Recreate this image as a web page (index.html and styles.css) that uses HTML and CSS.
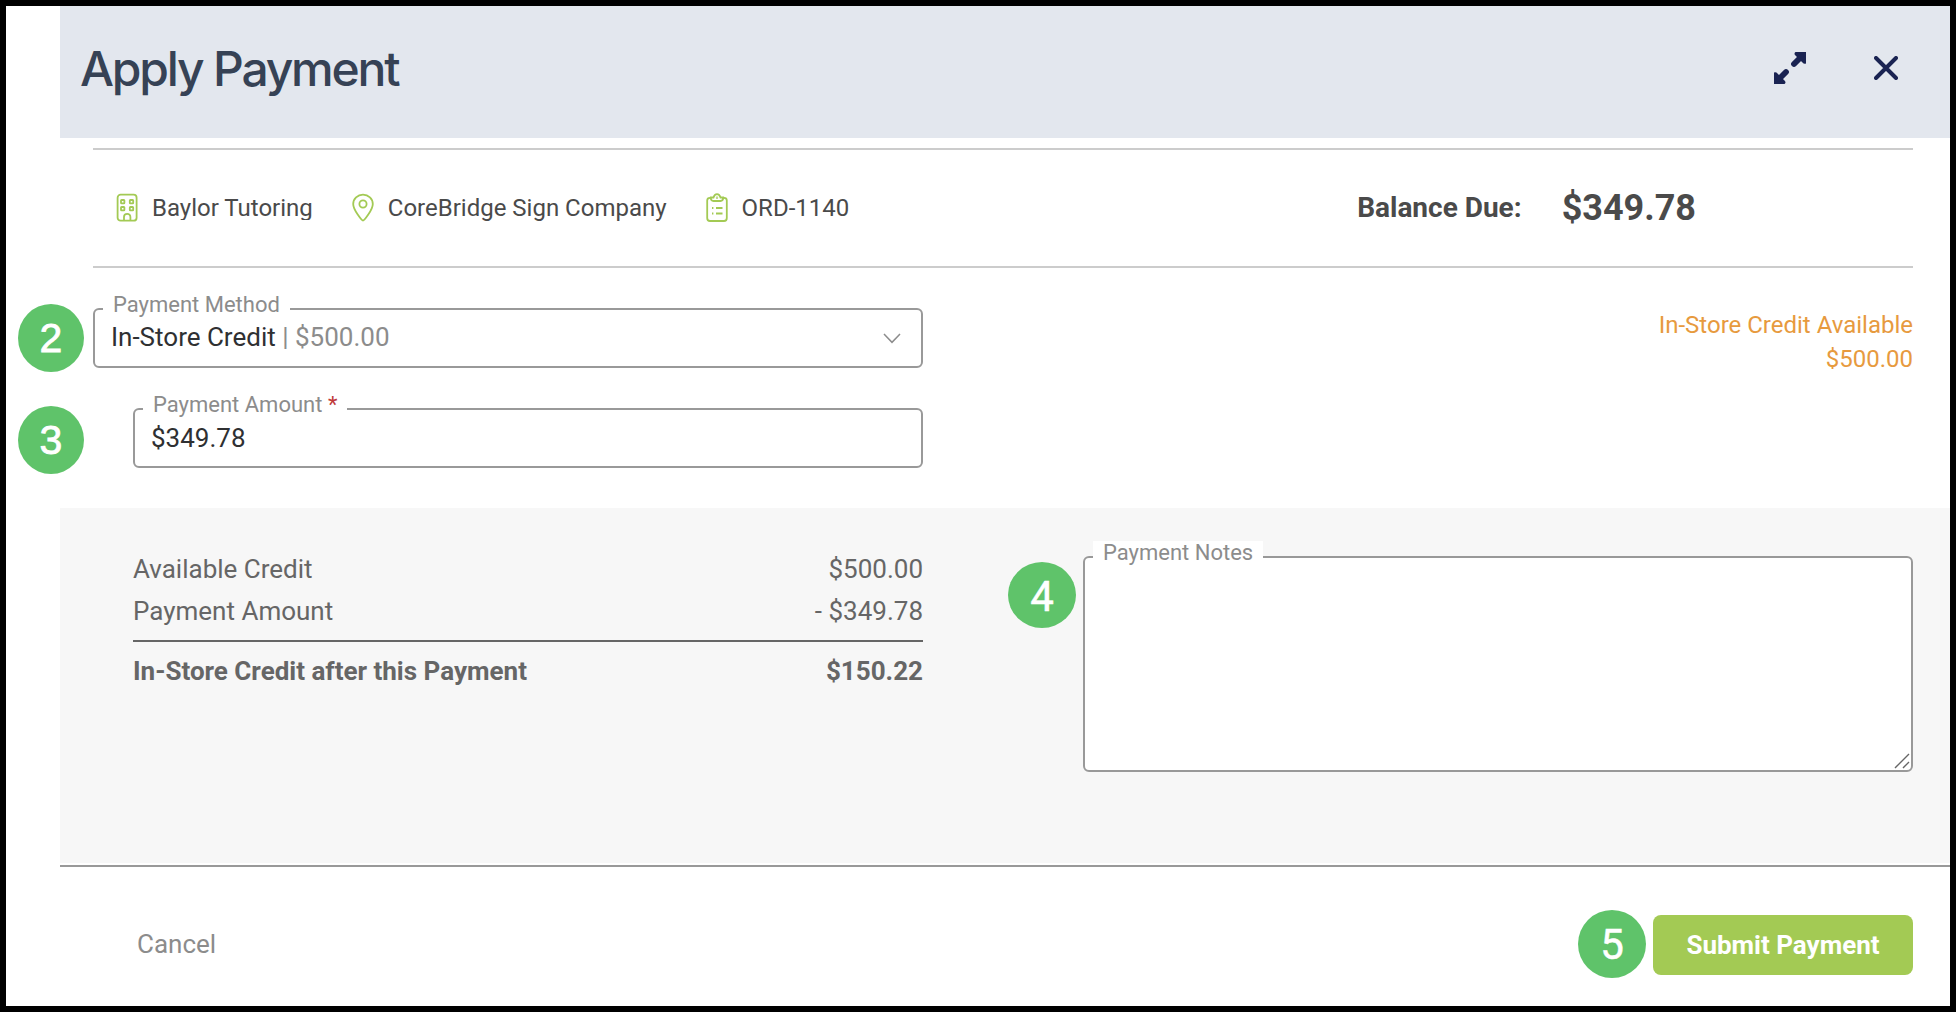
FILE: index.html
```html
<!DOCTYPE html>
<html lang="en">
<head>
    <meta charset="UTF-8">
    <meta name="viewport" content="width=device-width, initial-scale=1.0">
    <title>Apply Payment</title>
    <link rel="stylesheet" href="styles.css">
</head>
<body>
    <div class="modal">
        <header class="modal-header">
            <h1>Apply Payment</h1>
            <button class="icon-button" aria-label="Expand">
                <svg width="32" height="32" viewBox="0 0 32 32">
                    <path d="M21.500 0H32V11.500Q30 12.500 28.500 10.500L21.500 3.500Q19.500 1.500 21.500 0ZM10.500 32H0V20.500Q2 19.500 3.500 21.500L10.500 28.500Q12.500 30.500 10.500 32Z" fill="#1a2352"/>
                    <path d="M20 12L27 5M12 20L5 27" stroke="#1a2352" stroke-width="5.8" stroke-linecap="round"/>
                </svg>
            </button>
            <button class="icon-button close" aria-label="Close">
                <svg width="24" height="24" viewBox="0 0 24 24">
                    <path d="M2 2L22 22M22 2L2 22" stroke="#1a2352" stroke-width="4" stroke-linecap="round"/>
                </svg>
            </button>
        </header>

        <section class="order-info">
            <div class="info-item">
                <svg width="22" height="30" viewBox="0 0 22 30">
                    <rect x="1.6" y="1.7" width="19" height="26" rx="3"/>
                    <rect x="5" y="7" width="3.4" height="3.4" rx=".6"/>
                    <rect x="13.8" y="7" width="3.4" height="3.4" rx=".6"/>
                    <rect x="5" y="14" width="3.4" height="3.4" rx=".6"/>
                    <rect x="13.8" y="14" width="3.4" height="3.4" rx=".6"/>
                    <path d="M8 27.5V24a3.2 3.2 0 0 1 6.4 0V27.5"/>
                </svg>
                <span class="customer">Baylor Tutoring</span>
            </div>
            <div class="info-item">
                <svg width="22" height="30" viewBox="0 0 22 30">
                    <path d="M11 27.7C10 27.7 1.2 17 1.2 11A9.8 9.4 0 0 1 20.8 11C20.8 17 12 27.7 11 27.7Z"/>
                    <circle cx="11" cy="11" r="3.6"/>
                </svg>
                <span>CoreBridge Sign Company</span>
            </div>
            <div class="info-item">
                <svg width="22" height="30" viewBox="0 0 22 30">
                    <path d="M5 4.8H4Q1.2 4.8 1.2 7.6V25Q1.2 28 4 28H18Q20.8 28 20.8 25V7.6Q20.8 4.8 18 4.8H17"/>
                    <path d="M4.8 4.5Q4.8 8 7.5 8H14.5Q17.2 8 17.2 4.5H14.5Q13.5 1.2 11 1.2T7.5 4.5Z"/>
                    <path d="M6 15H7.4M10 15H16.5M6 20.5H7.4M10 20.5H16.5"/>
                    <circle cx="11" cy="4.8" r=".3"/>
                </svg>
                <span>ORD-1140</span>
            </div>
            <div class="balance">
                <span class="balance-label">Balance Due:</span>
                <span class="balance-value">$349.78</span>
            </div>
        </section>

        <section class="payment">
            <div class="fields">
                <div class="field">
                    <span class="step step-method">2</span>
                    <span class="field-label">Payment Method</span>
                    <span class="field-value">In-Store Credit <span class="muted">| $500.00</span></span>
                    <svg class="chevron" width="18" height="11" viewBox="0 0 18 11">
                        <path d="M1 1L9 9.3L17 1" fill="none" stroke="#8c8c8c" stroke-width="1.5"/>
                    </svg>
                </div>
                <div class="field field-amount">
                    <span class="step step-amount">3</span>
                    <span class="field-label">Payment Amount <span class="required">*</span></span>
                    <span class="field-value">$349.78</span>
                </div>
            </div>
            <div class="credit-note">
                <div>In-Store Credit Available</div>
                <div>$500.00</div>
            </div>
        </section>

        <section class="summary">
            <div class="totals">
                <div class="row"><span>Available Credit</span><span>$500.00</span></div>
                <div class="row"><span>Payment Amount</span><span>- $349.78</span></div>
                <div class="row total"><span>In-Store Credit after this Payment</span><span>$150.22</span></div>
            </div>
            <div class="notes">
                <span class="step step-notes">4</span>
                <label class="field-label" for="payment-notes">Payment Notes</label>
                <textarea id="payment-notes"></textarea>
                <svg class="grip" width="16" height="16" viewBox="0 0 16 16">
                    <path d="M1 15L15 1M9 15L15 9" stroke="#666" stroke-width="1.4"/>
                </svg>
            </div>
        </section>

        <footer class="modal-footer">
            <button class="cancel">Cancel</button>
            <div class="submit-wrap">
                <span class="step step-submit">5</span>
                <button class="submit">Submit Payment</button>
            </div>
        </footer>
    </div>
</body>
</html>
```
FILE: styles.css
```css
* {
    box-sizing: border-box;
}

body {
    margin: 0;
    height: 1012px;
    border: 6px solid #000;
    padding-left: 54px;
    background: #fff;
    font-family: Roboto, sans-serif;
    font-size: 26px;
    overflow: hidden;
}

button {
    border: 0;
    padding: 0;
    background: none;
    font: inherit;
}

svg {
    display: block;
}

/* header */
.modal-header {
    display: flex;
    align-items: center;
    height: 132px;
    padding: 0 52px 8px 20px;
    background: #e3e7ee;
}

h1 {
    flex: 1;
    margin: 0;
    color: #364255;
    font-family: Inter, sans-serif;
    font-size: 48px;
    font-weight: 500;
    letter-spacing: -2.2px;
}

.close {
    margin-left: 68px;
}

/* order info */
.order-info {
    display: flex;
    align-items: center;
    height: 120px;
    margin: 10px 37px 0 33px;
    padding-left: 23px;
    border-top: 2px solid #ccc;
    border-bottom: 2px solid #ccc;
    color: #4a4a4a;
}

.info-item {
    display: flex;
    align-items: center;
    gap: 14px;
    margin-right: 39px;
    font-size: 24px;
}

.info-item span {
    line-height: 24px;
}

.info-item .customer {
    overflow: hidden;
}

.info-item svg {
    fill: none;
    stroke: #a3ca54;
    stroke-width: 1.8;
}

.balance {
    display: flex;
    align-items: center;
    gap: 40px;
    margin-left: auto;
    margin-right: 217px;
    font-weight: 700;
}

.balance-label {
    padding-bottom: 2px;
    font-size: 28px;
}

.balance-value {
    font-size: 36px;
}

/* fields */
.payment {
    display: flex;
    justify-content: space-between;
    height: 240px;
    padding: 40px 37px 0 33px;
}

.fields {
    width: 830px;
}

.field {
    position: relative;
    display: flex;
    justify-content: space-between;
    height: 60px;
    padding: 12px 20px 0 16px;
    border: 2px solid #999;
    border-radius: 6px;
}

.field-amount {
    margin: 40px 0 0 40px;
    padding-top: 13px;
}

.field-label {
    position: absolute;
    top: -17px;
    left: 8px;
    padding: 0 10px;
    background: #fff;
    color: #8c8c8c;
    font-size: 22px;
    line-height: 23px;
    white-space: nowrap;
}

.field-value {
    color: #2f3032;
    line-height: 30px;
}

.muted {
    color: #8c8c8c;
}

.required {
    color: #c03a3a;
}

.chevron {
    margin-top: 11px;
}

.credit-note {
    color: #e79a3e;
    font-size: 24px;
    line-height: 34px;
    text-align: right;
}

/* summary */
.summary {
    display: flex;
    justify-content: space-between;
    height: 355px;
    padding: 40px 37px 0 73px;
    background: #f7f7f7;
}

.totals {
    width: 790px;
    color: #666;
}

.row {
    display: flex;
    justify-content: space-between;
    line-height: 42px;
}

.total {
    margin-top: 8px;
    padding-top: 8px;
    border-top: 2px solid #666;
    font-weight: 700;
}

.notes {
    position: relative;
    width: 830px;
    height: 216px;
    margin-top: 8px;
}

.notes textarea {
    display: block;
    width: 100%;
    height: 100%;
    border: 2px solid #999;
    border-radius: 6px;
    background: #fff;
    resize: none;
}

.notes .field-label {
    top: -15px;
    left: 10px;
}

.grip {
    position: absolute;
    right: 3px;
    bottom: 3px;
}

/* footer */
.modal-footer {
    display: flex;
    justify-content: space-between;
    align-items: flex-start;
    margin-top: 2px;
    padding: 48px 37px 0 77px;
    border-top: 2px solid #999;
}

.cancel {
    height: 58px;
    color: #8c8c8c;
}

.submit-wrap {
    position: relative;
}

.submit {
    width: 260px;
    height: 60px;
    border-radius: 8px;
    background: #a3ca54;
    color: #fff;
    font-weight: 700;
}

/* numbered step markers, hung beside the controls */
.step {
    position: absolute;
    z-index: 1;
    width: 68px;
    height: 68px;
    border-radius: 50%;
    background: #5fc36a;
    color: #fff;
    font-size: 42px;
    line-height: 70px;
    text-align: center;
    -webkit-text-stroke: 0.5px #fff;
}

.step-method,
.step-amount {
    width: 66px;
    font-family: "Liberation Sans", sans-serif;
    font-size: 41px;
    line-height: 68px;
    -webkit-text-stroke: 0.8px #fff;
}

.step-method {
    top: -6px;
    left: -77px;
}

.step-amount {
    top: -4px;
    left: -117px;
}

.step-notes {
    top: 6px;
    left: -75px;
    height: 66px;
}

.step-submit {
    top: -5px;
    left: -75px;
}
```
